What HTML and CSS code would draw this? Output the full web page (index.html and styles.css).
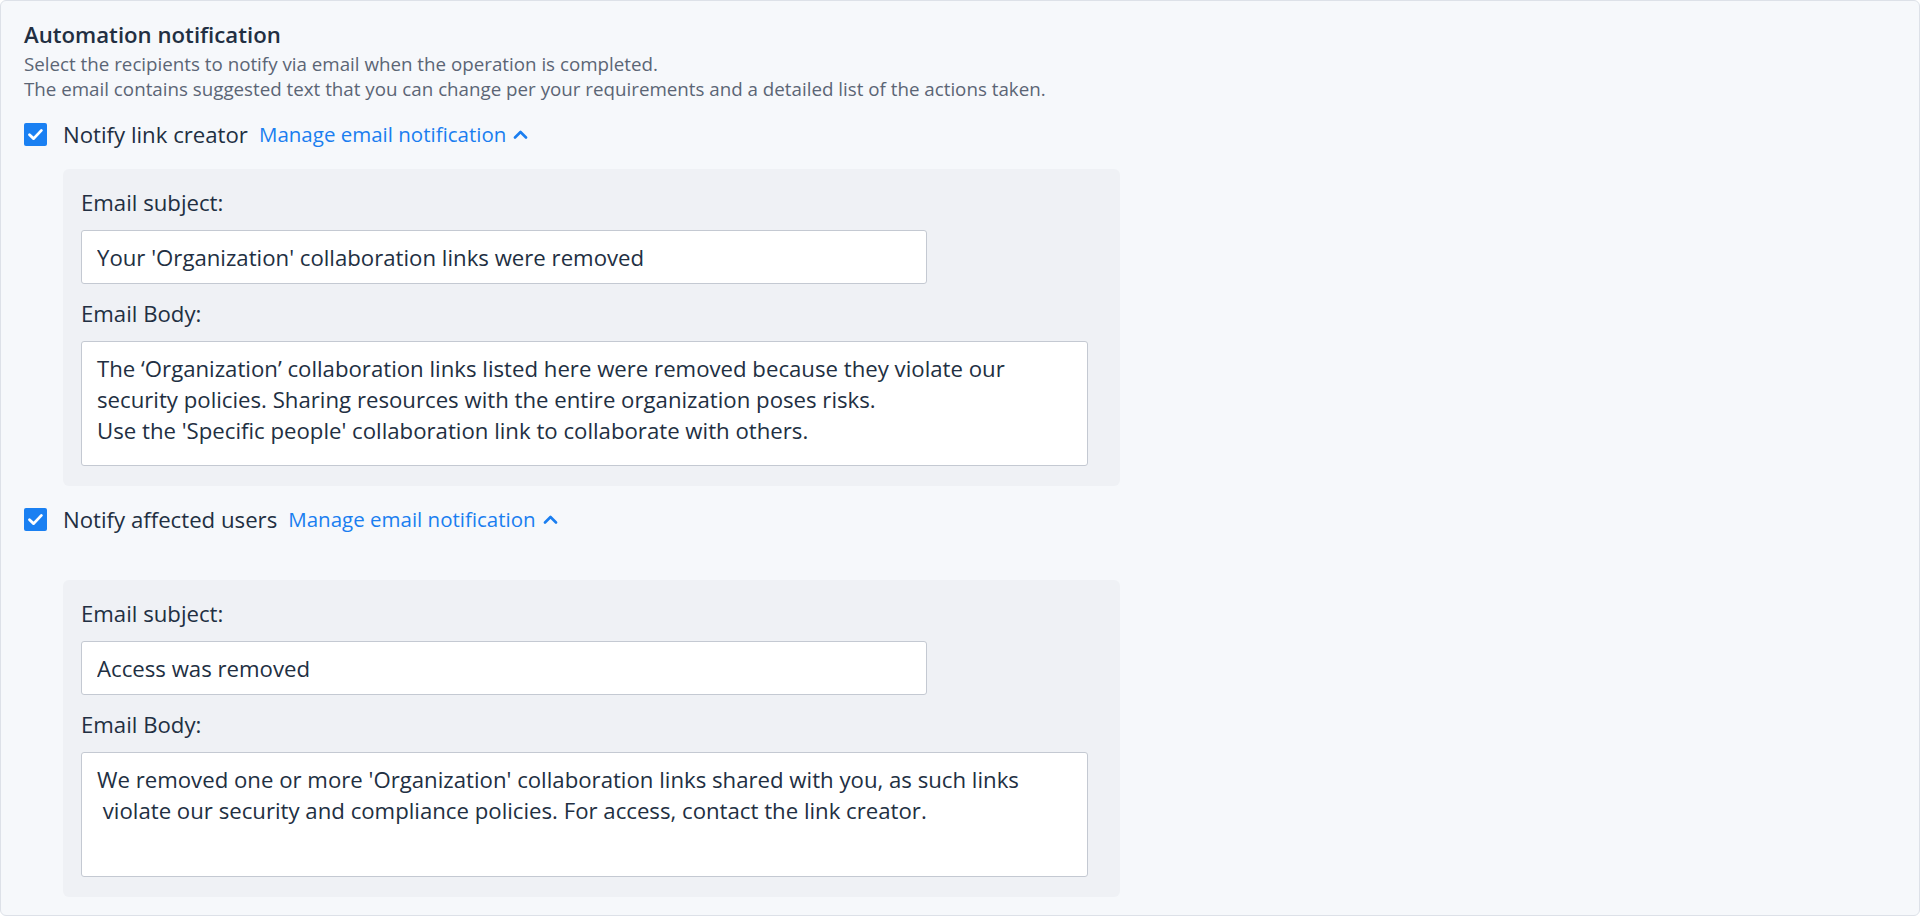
FILE: index.html
```html
<!DOCTYPE html>
<html lang="en">
<head>
<meta charset="utf-8">
<title>Automation notification</title>
<link rel="stylesheet" href="styles.css">
</head>
<body>
<div class="card">
  <div class="title">Automation notification</div>
  <div class="desc">Select the recipients to notify via email when the operation is completed.<br>The email contains suggested text that you can change per your requirements and a detailed list of the actions taken.</div>

  <div class="option">
    <span class="checkbox"><svg viewBox="0 0 23 23" width="23" height="23"><path d="M5.5 11.8 L9.6 15.6 L17.4 7.4" fill="none" stroke="#fff" stroke-width="2.8" stroke-linecap="round" stroke-linejoin="round"/></svg></span>
    <span class="option-label">Notify link creator</span>
    <a class="manage">Manage email notification<svg class="chev" viewBox="0 0 15 9" width="15" height="9"><path d="M2 7.5 L7.5 2 L13 7.5" fill="none" stroke="#1a7ef0" stroke-width="2.6" stroke-linecap="round" stroke-linejoin="round"/></svg></a>
  </div>
  <div class="panel">
    <label class="field-label">Email subject:</label>
    <input class="text-input" type="text" value="Your 'Organization' collaboration links were removed">
    <label class="field-label">Email Body:</label>
    <textarea class="text-area">The ‘Organization’ collaboration links listed here were removed because they violate our
security policies. Sharing resources with the entire organization poses risks.
Use the 'Specific people' collaboration link to collaborate with others.</textarea>
  </div>

  <div class="option">
    <span class="checkbox"><svg viewBox="0 0 23 23" width="23" height="23"><path d="M5.5 11.8 L9.6 15.6 L17.4 7.4" fill="none" stroke="#fff" stroke-width="2.8" stroke-linecap="round" stroke-linejoin="round"/></svg></span>
    <span class="option-label">Notify affected users</span>
    <a class="manage">Manage email notification<svg class="chev" viewBox="0 0 15 9" width="15" height="9"><path d="M2 7.5 L7.5 2 L13 7.5" fill="none" stroke="#1a7ef0" stroke-width="2.6" stroke-linecap="round" stroke-linejoin="round"/></svg></a>
  </div>
  <div class="panel panel-spaced">
    <label class="field-label">Email subject:</label>
    <input class="text-input" type="text" value="Access was removed">
    <label class="field-label">Email Body:</label>
    <textarea class="text-area">We removed one or more 'Organization' collaboration links shared with you, as such links
 violate our security and compliance policies. For access, contact the link creator.</textarea>
  </div>
</div>
</body>
</html>
```
FILE: styles.css
```css
html, body {
  margin: 0;
  padding: 0;
  background: #ffffff;
}

body {
  font-family: "Open Sans", "Noto Sans", sans-serif;
  color: #222f42;
}

.card {
  box-sizing: border-box;
  width: 1920px;
  height: 916px;
  border: 1px solid #dde1e8;
  border-radius: 6px;
  background: #f6f8fb;
  padding: 18px 23px 0 23px;
  display: flex;
  flex-direction: column;
  align-items: flex-start;
}

.title {
  font-size: 22.2px;
  font-weight: 600;
  line-height: 32px;
  color: #222f42;
}

.desc {
  font-size: 18.75px;
  line-height: 25px;
  color: #5b6575;
}

.option {
  margin-top: 18px;
  height: 31px;
  display: flex;
  align-items: center;
}

.checkbox {
  width: 23px;
  height: 23px;
  border-radius: 2px;
  background: #1a80f2;
  display: flex;
  flex: none;
}

.option-label {
  margin-left: 16px;
  font-size: 22.2px;
  line-height: 31px;
  color: #222f42;
}

.manage {
  margin-left: 11px;
  font-size: 20.5px;
  line-height: 31px;
  color: #1a7ef0;
  display: flex;
  align-items: center;
  cursor: pointer;
}

.chev {
  margin-left: 7px;
  margin-top: -1px;
}

.panel {
  box-sizing: border-box;
  width: 1057px;
  margin-left: 39px;
  margin-top: 19px;
  padding: 18px 32px 20px 18px;
  background: #eff1f5;
  border-radius: 6px;
  display: flex;
  flex-direction: column;
  align-items: flex-start;
}

.panel-spaced {
  margin-top: 45px;
}

.field-label {
  font-size: 22.2px;
  line-height: 31px;
  margin-bottom: 12px;
  color: #222f42;
}

.text-input {
  box-sizing: border-box;
  width: 846px;
  height: 54px;
  margin: 0 0 14px 0;
  padding: 0 15px;
  border: 1px solid #c4c9d2;
  border-radius: 3px;
  background: #ffffff;
  font-family: "Open Sans", "Noto Sans", sans-serif;
  font-size: 22.2px;
  color: #222f42;
  outline: none;
}

.text-area {
  box-sizing: border-box;
  width: 1007px;
  height: 125px;
  margin: 0;
  padding: 11px 15px;
  border: 1px solid #c4c9d2;
  border-radius: 3px;
  background: #ffffff;
  font-family: "Open Sans", "Noto Sans", sans-serif;
  font-size: 22.2px;
  line-height: 31px;
  color: #222f42;
  resize: none;
  overflow: hidden;
  white-space: pre;
  outline: none;
}
```
